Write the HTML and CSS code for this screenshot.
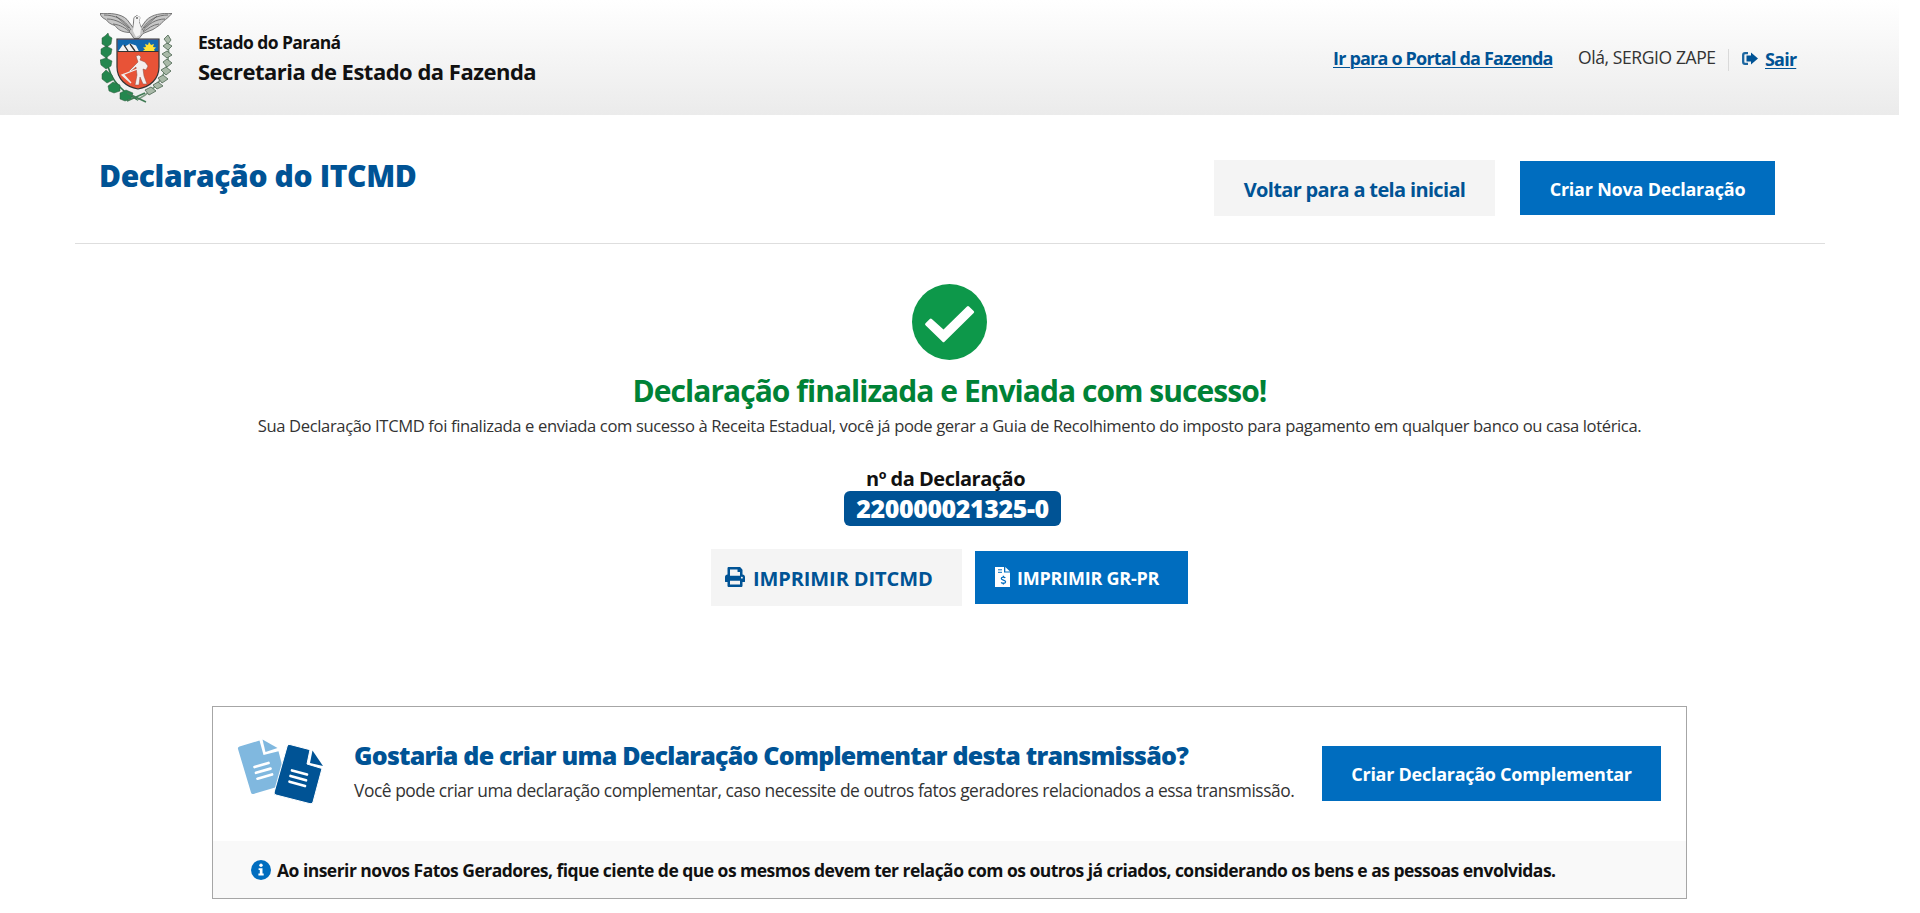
FILE: index.html
```html
<!DOCTYPE html>
<html lang="pt-BR">
<head>
<meta charset="utf-8">
<title>Declaração do ITCMD</title>
<link rel="stylesheet" href="styles.css">
</head>
<body>
<div class="page">
  <header class="header">
    <svg class="emblem" viewBox="0 0 73 90">
      <g fill="none" stroke="#2b7548" stroke-width="1.6"><path d="M8 24C3 48 8 72 38 87"/><path d="M67 24c5 24-1 47-30 63" stroke="#7d9a82"/></g>
      <g fill="#24874e" stroke="#33583f" stroke-width=".5">
        <path d="M2 25l3-2 3-3 1 3 3 2-1 6-4 3-5-3zM1 36l5-3 6 3-1 5-5 4-5-4zM0 47l6-2 6 3-1 5-5 3-5-4zM2 61l4-4 6 5 1 5-6 3-5-4zM8 73l5-4 7 3v6l-6 2-5-2zM20 80l6-3 7 3-2 6-6 2-5-2z"/>
      </g>
      <g fill="#a9b9a8" stroke="#59705d" stroke-width=".9">
        <path d="M64 26l4-4 3 5-3 4zM63 33l4-3 5 3-4 4zM62 41l5-3 5 4-5 3zM63 49l4-3 5 4-5 4zM61 57l5-3 5 4-5 4zM58 65l5-3 5 4-6 4zM53 72l5-3 5 4-6 3zM45 77l6-3 5 4-7 4z"/>
      </g>
      <path d="M27 88l18-8M46 89l-19-9" stroke="#417b55" stroke-width="1.6"/>
      <g fill="#c6c6c6" stroke="#5c5c5c" stroke-width=".8">
        <path d="M0 .5c10-.5 21 0 27 6l6 8 1-10 3-2 3 2-1 4 2 6 5-7C52 1 62 0 72 .5c-4 4-6 6-8 7-4 5-8 7-11 9l-10 4-4 5h-5l-4-6c-9 0-13-4-15-7-4-1-7-3-9-6-3-1-5-3-6-6z"/>
        <path fill="none" d="M4 2c10 0 21 4 27 15M7 6c9 0 18 5 23 12M13 11c8 1 12 4 17 8M68 2C58 2 48 6 42 17M65 6c-9 0-17 5-22 12M59 11c-7 1-10 4-16 8M16 3l13 12M57 3L44 15"/>
      </g>
      <path d="M34.500 4.500l3-2 2.500 2-1 4.500 2 6-1 7-4 2-3-6 1-8z" fill="#f4f4f4"/>
      <circle cx="37" cy="5" r=".9" fill="#555"/>
      <path d="M17 26h42v28c0 12-9 20-21 22-12-2-21-10-21-22z" fill="#e85337" stroke="#333" stroke-width="1.2"/>
      <path d="M17.5 26.500h41v12h-41z" fill="#1168af"/>
      <path d="M18 38.500l5-7 2 2 5-3 6 2 3 6z" fill="#f3f3f3"/>
      <path d="M24 32l4 6M30 31l5 7" fill="none" stroke="#333" stroke-width="1.300"/>
      <path d="M42 38.500l3-2-2-2 3-.5-1-3 3 1 1-3 2 3 3-1-1 3 3 .5-2 2 1 2z" fill="#ffe336"/>
      <path d="M17.500 38.500h41" stroke="#333"/>
      <path d="M36 43l3-1 2 2-1 3 5 2 3 4-2 4-3-1 1 7 3 8h-4l-3-7-1 8h-4l2-10-1-8-6 5-1-1 6-6 3-3z" fill="#f5eeee" stroke="#8d4a40" stroke-width=".5"/>
      <path d="M40 55L22 62l9 8-8-9" fill="none" stroke="#eee" stroke-width="1.300"/>
    </svg>
    <div class="brand">
      <div class="brand-state">Estado do Paraná</div>
      <div class="brand-dept">Secretaria de Estado da Fazenda</div>
    </div>
    <nav class="user-nav">
      <a class="portal">Ir para o Portal da Fazenda</a>
      <span class="hello">Olá, SERGIO ZAPE</span>
      <span class="sep"></span>
      <svg class="exit" viewBox="0 0 16 13"><path d="M6 1.200H3A1.800 1.800 0 0 0 1.200 3v7A1.800 1.800 0 0 0 3 11.800h3" fill="none" stroke="#1c66a0" stroke-width="2.300"/><path d="M9 .5L16 6.500 9 12.500V9.500H4.500v-6H9z" fill="#005395"/></svg>
      <a class="leave">Sair</a>
    </nav>
  </header>

  <section class="title-bar">
    <h1 class="title">Declaração do ITCMD</h1>
    <button class="btn light back"><span>Voltar para a tela inicial</span></button>
    <button class="btn solid create"><span>Criar Nova Declaração</span></button>
  </section>

  <main class="result">
    <svg class="check" viewBox="0 0 75 76"><ellipse cx="37.500" cy="38" rx="37.500" ry="38" fill="#0d984a"/><path d="M13.500 39.300l4.300-4.200q1-1 2 0L31.500 45.500 55 22.400q1-1 2 0l4.700 4.700q1 1 0 2L32.500 57.700q-1 1-2 0L13.500 41.300q-1-1 0-2z" fill="#fff"/></svg>
    <h2 class="success">Declaração finalizada e Enviada com sucesso!</h2>
    <p class="detail">Sua Declaração ITCMD foi finalizada e enviada com sucesso à Receita Estadual, você já pode gerar a Guia de Recolhimento do imposto para pagamento em qualquer banco ou casa lotérica.</p>
    <div class="number-label">nº da Declaração</div>
    <div class="number">220000021325-0</div>
    <div class="actions">
      <button class="btn light print">
        <svg class="printer" viewBox="0 0 512 512"><path fill="#005395" d="M448 192V77.250c0-8.490-3.370-16.620-9.370-22.630L393.370 9.370c-6-6-14.140-9.370-22.630-9.370H96C78.330 0 64 14.330 64 32v160c-35.350 0-64 28.650-64 64v112c0 8.840 7.160 16 16 16h48v96c0 17.670 14.330 32 32 32h320c17.670 0 32-14.330 32-32v-96h48c8.840 0 16-7.160 16-16V256c0-35.350-28.650-64-64-64zm-64 256H128v-96h256v96zm0-224H128V64h192v48c0 8.840 7.160 16 16 16h48v96zm48 72c-13.250 0-24-10.750-24-24 0-13.260 10.750-24 24-24s24 10.740 24 24c0 13.250-10.750 24-24 24z"/></svg>
        <span>IMPRIMIR DITCMD</span>
      </button>
      <button class="btn solid invoice">
        <svg class="bill" viewBox="0 0 15 20"><path d="M0 0h9v5.500h6V20H0z" fill="#fff"/><path d="M10.300 0L15 4.500h-4.700z" fill="#fff"/><path d="M3 2.800h4M3 5.300h4" stroke="#006dbf" stroke-width="1"/><path d="M10.300 10.800C9.400 9.700 6.300 9.700 6.300 11.500c0 2 4.300 1 4.300 3.200 0 2-3.500 1.900-4.400.6M8.400 8.800v1.500M8.400 16v1.600" fill="none" stroke="#006dbf" stroke-width="1.300"/></svg>
        <span>IMPRIMIR GR-PR</span>
      </button>
    </div>
  </main>

  <section class="card">
    <div class="card-main">
      <svg class="docs" viewBox="0 0 86 66">
        <path d="M2.500 7.500L22.500 1.500 26.500 16 41.500 12.300 50 45 16.500 55Q14.500 55.500 14 53.500L1 10Q.5 8.200 2.500 7.500z" fill="#80b8df"/>
        <path d="M25.500 .5L40.500 9 28.500 13z" fill="#80b8df"/>
        <path d="M17.500 28l14-4M19 33.800l14.500-4.200M20.500 39.700l14.500-4.200" stroke="#fff" stroke-width="2.700" stroke-linecap="round"/>
        <path d="M53 5.500L73 10.700 70 25 85 29.500 76 63Q75.500 65.200 73 64.700L39 56Q36.500 55.300 37.200 53L50.200 7Q50.700 5 53 5.500z" fill="#005395" stroke="#fff" stroke-width="1"/>
        <path d="M75.500 11.500L86 27 73 24z" fill="#005395"/>
        <path d="M55 31.500L70 35.500M53.500 37l15.500 4.300M52.500 42.700l15.500 4.300" stroke="#fff" stroke-width="2.700" stroke-linecap="round"/>
      </svg>
      <div class="card-text">
        <h3 class="question">Gostaria de criar uma Declaração Complementar desta transmissão?</h3>
        <p class="explain">Você pode criar uma declaração complementar, caso necessite de outros fatos geradores relacionados a essa transmissão.</p>
      </div>
      <button class="btn solid extra"><span>Criar Declaração Complementar</span></button>
    </div>
    <div class="card-note">
      <svg class="info" viewBox="0 0 20 20"><circle cx="10" cy="10" r="10" fill="#006dbf"/><circle cx="10" cy="5.300" r="1.700" fill="#fff"/><path d="M7.600 8.300h3.900v5.200h1.200v1.900H7.400v-1.900h1.400v-3.400H7.600z" fill="#fff"/></svg>
      <span>Ao inserir novos Fatos Geradores, fique ciente de que os mesmos devem ter relação com os outros já criados, considerando os bens e as pessoas envolvidas.</span>
    </div>
  </section>
</div>
</body>
</html>
```
FILE: styles.css
```css
* { box-sizing: border-box; }
body {
  margin: 0;
  background: #fff;
  color: #111;
  font-family: "Segoe UI", "Open Sans", "Noto Sans", sans-serif;
  overflow: hidden;
}
h1, h2, h3, p { margin: 0; white-space: nowrap; }
svg { display: block; flex: none; }
.page { width: 1899px; }

.header {
  display: flex;
  align-items: flex-start;
  height: 115px;
  padding: 0 103px 0 100px;
  background: linear-gradient(#fff, #ebebeb);
  white-space: nowrap;
}
.emblem { width: 73px; height: 90px; margin-top: 13px; }
.brand { margin: 29px 0 0 25px; font-weight: 700; }
.brand-state { font-size: 17.5px; line-height: 27px; letter-spacing: -0.57px; }
.brand-dept { font-size: 22px; line-height: 30px; letter-spacing: -0.5px; }

.user-nav {
  display: flex;
  align-items: flex-start;
  margin: 45px 0 0 auto;
  font-size: 18px;
  line-height: 24px;
}
.portal, .leave {
  color: #005395;
  font-weight: 700;
  text-decoration: underline;
  text-decoration-thickness: 1px;
  text-underline-offset: 2px;
}
.portal { width: 221px; margin-top: 1px; letter-spacing: -0.8px; }
.hello { width: 139px; margin-left: 24px; color: #333; font-size: 17.5px; letter-spacing: -0.4px; }
.sep { width: 1px; height: 22px; margin: 4px 13px 0 11px; background: #d9d9d9; }
.exit { width: 16px; height: 13px; margin-top: 7px; }
.leave { width: 31px; margin: 2px 0 0 7px; letter-spacing: -0.8px; }

.btn {
  display: flex;
  align-items: center;
  justify-content: center;
  flex: none;
  border: 0;
  padding: 1px 0 0;
  font: 700 18px/24px "Segoe UI", "Open Sans", "Noto Sans", sans-serif;
  white-space: nowrap;
}
.light { background: #f4f4f4; color: #005395; font-size: 20px; }
.solid { background: #006dbf; color: #fff; }

.title-bar {
  display: flex;
  align-items: flex-start;
  width: 1750px;
  height: 129px;
  margin-left: 75px;
  padding: 41px 50px 0 24px;
  border-bottom: 1px solid #dedede;
}
.title { margin-right: auto; color: #005395; font-size: 30px; font-weight: 800; line-height: 40px; letter-spacing: -0.37px; }
.back { width: 281px; height: 56px; margin-top: 4px; padding-top: 4px; letter-spacing: -0.66px; }
.create { width: 255px; height: 54px; margin: 5px 0 0 25px; letter-spacing: -0.22px; }

.result {
  display: flex;
  flex-direction: column;
  align-items: center;
  padding-top: 40px;
}
.check { width: 75px; height: 76px; }
.success { margin-top: 10px; color: #008236; font-size: 30px; line-height: 41px; letter-spacing: -0.96px; }
.detail { margin-top: 3px; color: #333; font-size: 16.6px; line-height: 24px; letter-spacing: -0.373px; }
.number-label { margin: 27px 8px 0 0; font-size: 20px; font-weight: 700; line-height: 27px; letter-spacing: -0.5px; }
.number {
  width: 217px;
  height: 35px;
  margin: -1px 0 0 6px;
  border-radius: 6px;
  background: #005395;
  color: #fff;
  font-size: 25px;
  font-weight: 800;
  line-height: 35px;
  letter-spacing: -0.43px;
  text-align: center;
}
.actions { display: flex; align-items: flex-start; gap: 13px; margin-top: 23px; }
.print { width: 251px; height: 57px; padding-top: 2px; justify-content: flex-start; padding-left: 14px; letter-spacing: -0.1px; }
.printer { width: 20px; height: 20px; margin: -3px 8px 0 0; }
.invoice { width: 213px; height: 53px; margin-top: 2px; justify-content: flex-start; padding-left: 20px; letter-spacing: -0.23px; }
.bill { width: 15px; height: 20px; margin: -2px 7px 0 0; }

.card { width: 1475px; height: 193px; margin: 100px 0 0 212px; border: 1px solid #a6a6a6; }
.card-main { display: flex; align-items: flex-start; height: 134px; padding: 32px 25px 0 24px; }
.docs { width: 86px; height: 66px; }
.card-text { margin: 0 auto 0 31px; }
.question { color: #005395; font-size: 25px; font-weight: 800; line-height: 33px; letter-spacing: -0.78px; }
.explain { margin-top: 6px; color: #333; font-size: 17.4px; line-height: 24px; letter-spacing: -0.46px; }
.extra { width: 339px; height: 55px; margin-top: 7px; letter-spacing: -0.27px; }
.card-note {
  display: flex;
  align-items: center;
  height: 57px;
  padding-left: 38px;
  background: #f9f9f9;
  font-size: 17.5px;
  font-weight: 700;
  letter-spacing: -0.525px;
  white-space: nowrap;
}
.info { width: 20px; height: 20px; margin: 0 6px 0 0; }
```
